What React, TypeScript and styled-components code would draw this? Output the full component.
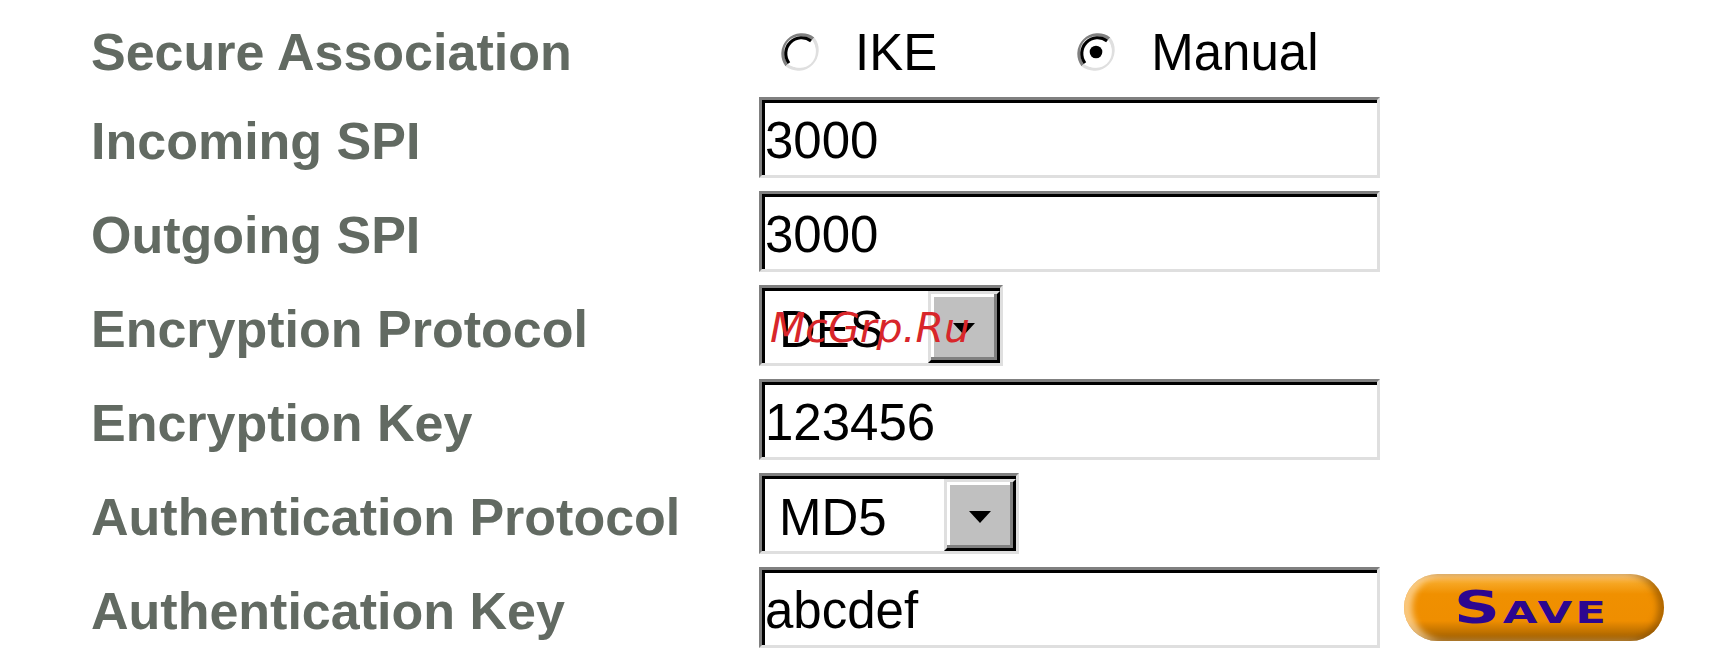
import styled, { createGlobalStyle } from 'styled-components';

const GlobalStyle = createGlobalStyle`
  html, body {
    margin: 0;
    padding: 0;
    background: #ffffff;
  }
`;

const Form = styled.div`
  display: grid;
  grid-template-columns: 668px auto 1fr;
  grid-template-rows: 78px repeat(6, 81px);
  row-gap: 13px;
  align-items: center;
  padding: 6px 0 0 91px;
`;

const Label = styled.div<{ $first?: boolean }>`
  font-family: "Liberation Sans", Arial, sans-serif;
  font-weight: bold;
  font-size: 52px;
  line-height: 1;
  color: #626a62;
  white-space: nowrap;
  padding-top: ${({ $first }) => ($first ? '14px' : '6px')};
`;

const RadioGroup = styled.div`
  grid-column: 2 / span 2;
  display: flex;
  align-items: center;
  padding: 14px 0 0 22px;
`;

const RadioOption = styled.label<{ $last?: boolean }>`
  display: flex;
  align-items: center;
  gap: 36px;
  margin-right: ${({ $last }) => ($last ? '0' : '140px')};
  font-family: "Liberation Sans", Arial, sans-serif;
  font-size: 51px;
  line-height: 1;
  color: #000;
`;

const inset = `
  box-sizing: border-box;
  border: 3px solid;
  border-color: #808080 #dfdfdf #dfdfdf #808080;
  box-shadow: inset 3px 3px 0 #000;
  background: #fff;
`;

const TextInput = styled.input`
  ${inset}
  width: 621px;
  height: 81px;
  margin: 0;
  padding: 6px 0 0 3px;
  font-family: "Liberation Sans", Arial, sans-serif;
  font-size: 51px;
  color: #000;
  outline: none;
`;

const SelectBox = styled.div<{ $width: number }>`
  ${inset}
  position: relative;
  width: ${({ $width }) => $width}px;
  height: 81px;
  padding: 3px 0 0 3px;
  display: flex;
  align-items: stretch;
`;

const SelectValue = styled.span`
  flex: 1;
  display: flex;
  align-items: center;
  padding: 4px 0 0 14px;
  font-family: "Liberation Sans", Arial, sans-serif;
  font-size: 51px;
  color: #000;
`;

const ArrowButton = styled.span`
  box-sizing: border-box;
  width: 72px;
  display: flex;
  align-items: center;
  justify-content: center;
  background: #c0c0c0;
  border: 3px solid;
  border-color: #dfdfdf #000 #000 #dfdfdf;
  box-shadow: inset -3px -3px 0 #808080, inset 3px 3px 0 #fff;
`;

const Arrow = styled.span`
  width: 0;
  height: 0;
  border-left: 11px solid transparent;
  border-right: 11px solid transparent;
  border-top: 12px solid #000;
  margin-top: 4px;
`;

const Watermark = styled.span`
  position: absolute;
  left: 8px;
  top: 16px;
  font-family: "DejaVu Sans", sans-serif;
  font-style: italic;
  font-size: 41px;
  color: #d8262a;
  pointer-events: none;
  white-space: nowrap;
`;

const ControlCell = styled.div`
  display: flex;
  align-items: center;
`;

const SaveButton = styled.button`
  width: 260px;
  height: 67px;
  margin-left: 24px;
  border: none;
  border-radius: 34px;
  background: linear-gradient(
    to bottom,
    #ffc878 0%,
    #f6a623 14%,
    #f09000 30%,
    #ef8e00 70%,
    #c47400 85%,
    #9a5c00 100%
  );
  box-shadow: inset -6px 0 6px rgba(120, 70, 0, 0.55), inset 8px 0 6px rgba(255, 225, 180, 0.7);
  display: flex;
  align-items: center;
  justify-content: center;
  padding: 0;
  cursor: pointer;
`;

const SaveText = styled.span`
  display: inline-block;
  font-family: "DejaVu Sans", sans-serif;
  font-weight: bold;
  font-size: 44px;
  font-variant: small-caps;
  letter-spacing: 2px;
  color: #2c0690;
  transform: scaleX(1.45);
  line-height: 1;
  margin-left: -6px;
`;

const Radio = ({ checked }: { checked?: boolean }) => (
  <svg width="38" height="38" viewBox="0 0 12 12">
    <path d="M10.2 1.8 A6 6 0 0 0 1.8 10.2" stroke="#808080" strokeWidth="1" fill="none" />
    <path d="M1.8 10.2 A6 6 0 0 0 10.2 1.8" stroke="#dfdfdf" strokeWidth="1" fill="none" />
    <circle cx="6" cy="6" r="5" fill="#fff" />
    <path d="M9.5 2.5 A5 5 0 0 0 2.5 9.5" stroke="#000" strokeWidth="1" fill="none" />
    {checked && <circle cx="6" cy="6" r="2" fill="#000" />}
  </svg>
);

const Select = ({ value, width, mark }: { value: string; width: number; mark?: boolean }) => (
  <SelectBox $width={width}>
    <SelectValue>{value}</SelectValue>
    <ArrowButton>
      <Arrow />
    </ArrowButton>
    {mark && <Watermark>McGrp.Ru</Watermark>}
  </SelectBox>
);

export default function App() {
  return (
    <>
      <GlobalStyle />
      <Form>
        <Label $first>Secure Association</Label>
        <RadioGroup>
          <RadioOption>
            <Radio />
            IKE
          </RadioOption>
          <RadioOption $last>
            <Radio checked />
            Manual
          </RadioOption>
        </RadioGroup>

        <Label>Incoming SPI</Label>
        <TextInput defaultValue="3000" />
        <span />

        <Label>Outgoing SPI</Label>
        <TextInput defaultValue="3000" />
        <span />

        <Label>Encryption Protocol</Label>
        <ControlCell>
          <Select value="DES" width={244} mark />
        </ControlCell>
        <span />

        <Label>Encryption Key</Label>
        <TextInput defaultValue="123456" />
        <span />

        <Label>Authentication Protocol</Label>
        <ControlCell>
          <Select value="MD5" width={260} />
        </ControlCell>
        <span />

        <Label>Authentication Key</Label>
        <TextInput defaultValue="abcdef" />
        <SaveButton>
          <SaveText>Save</SaveText>
        </SaveButton>
      </Form>
    </>
  );
}
